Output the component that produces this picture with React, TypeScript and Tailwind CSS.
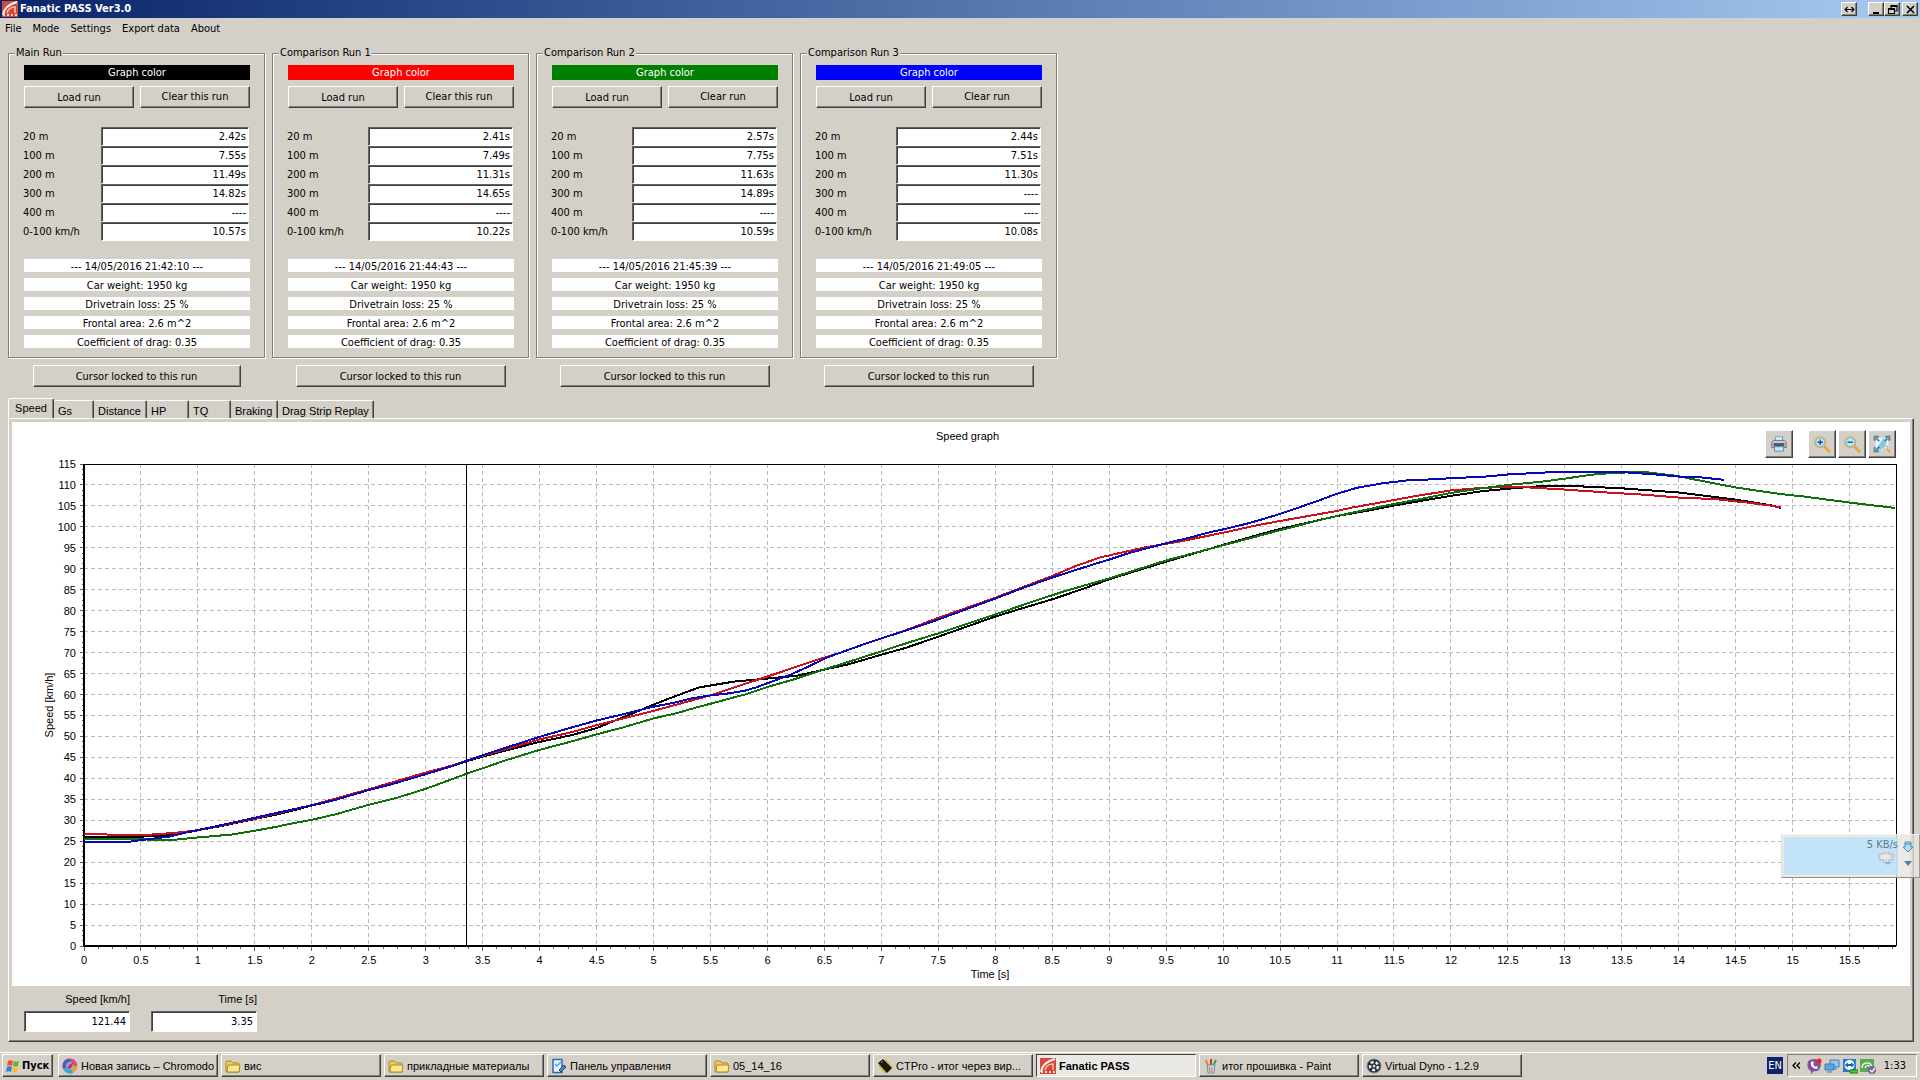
import type { ReactNode } from 'react'
import clsx from 'clsx'

interface Run {
  id: string
  title: string
  color: string
  clearLabel: string
  fieldWidth: string
  lockWidth: string
  times: string[]
  date: string
}

const DISTANCES = ['20 m', '100 m', '200 m', '300 m', '400 m', '0-100 km/h']

const SETUP = [
  'Car weight: 1950 kg',
  'Drivetrain loss: 25 %',
  'Frontal area: 2.6 m^2',
  'Coefficient of drag: 0.35',
]

const RUNS: Run[] = [
  {
    id: 'main',
    title: 'Main Run',
    color: 'bg-black',
    clearLabel: 'Clear this run',
    fieldWidth: 'w-[148px]',
    lockWidth: 'w-[208px]',
    times: ['2.42s', '7.55s', '11.49s', '14.82s', '----', '10.57s'],
    date: '14/05/2016 21:42:10',
  },
  {
    id: 'cmp1',
    title: 'Comparison Run 1',
    color: 'bg-[#ff0000]',
    clearLabel: 'Clear this run',
    fieldWidth: 'w-[145px]',
    lockWidth: 'w-[210px]',
    times: ['2.41s', '7.49s', '11.31s', '14.65s', '----', '10.22s'],
    date: '14/05/2016 21:44:43',
  },
  {
    id: 'cmp2',
    title: 'Comparison Run 2',
    color: 'bg-[#008000]',
    clearLabel: 'Clear run',
    fieldWidth: 'w-[145px]',
    lockWidth: 'w-[210px]',
    times: ['2.57s', '7.75s', '11.63s', '14.89s', '----', '10.59s'],
    date: '14/05/2016 21:45:39',
  },
  {
    id: 'cmp3',
    title: 'Comparison Run 3',
    color: 'bg-[#0000ff]',
    clearLabel: 'Clear run',
    fieldWidth: 'w-[145px]',
    lockWidth: 'w-[210px]',
    times: ['2.44s', '7.51s', '11.30s', '----', '----', '10.08s'],
    date: '14/05/2016 21:49:05',
  },
]

const TABS = [
  { label: 'Gs', width: 'w-[40px]' },
  { label: 'Distance', width: 'w-[53px]' },
  { label: 'HP', width: 'w-[42px]' },
  { label: 'TQ', width: 'w-[42px]' },
  { label: 'Braking', width: 'w-[47px]' },
  { label: 'Drag Strip Replay', width: 'w-[96px]' },
]

// Visible range of the speed graph: seconds across, km/h up.
const T_MAX = 15.907
const V_MAX = 115
const CURSOR_T = 3.356

type Point = [number, number]

const MAIN: Point[] = [
  [0, 26.1], [0.4, 26], [0.6, 26.2], [0.8, 26.6], [1, 27.6], [1.2, 28.6], [1.5, 30.3], [1.7, 31.4], [2, 33.5],
  [2.2, 34.8], [2.5, 37.2], [2.7, 38.6], [3, 41], [3.24, 43], [3.36, 44.1], [3.5, 45.2], [3.77, 47.1], [4, 48.7],
  [4.28, 50.3], [4.5, 52], [4.79, 55.2], [5, 57.6], [5.19, 59.6], [5.4, 61.7], [5.71, 63.1], [6, 63.8],
  [6.26, 64.5], [6.49, 65.9], [6.71, 67.2], [7, 69.5], [7.21, 71.1], [7.5, 73.8], [8, 78.6], [8.3, 81.1],
  [8.51, 82.8], [8.78, 85.3], [9, 87.5], [9.5, 91.7], [10, 95.7], [10.32, 98.2], [10.5, 99.5], [11, 102.6],
  [11.28, 103.9], [11.5, 105.1], [12, 107.4], [12.27, 108.5], [12.5, 109.1], [12.8, 109.75], [13.07, 109.75],
  [13.5, 109.2], [14, 108.2], [14.5, 106.5], [14.8, 105.2], [14.9, 104.5],
]

const RED: Point[] = [
  [0, 26.7], [0.2, 26.6], [0.6, 26.6], [0.8, 27], [1, 27.6], [1.2, 28.7], [1.5, 30.4], [2, 33.6], [2.5, 37.4],
  [3, 41.4], [3.24, 43.1], [3.36, 44.2], [3.5, 45.4], [3.77, 47.5], [4, 49.3], [4.28, 51], [4.5, 52.7],
  [5, 56.1], [5.5, 59.8], [5.8, 62.5], [6, 64.3], [6.45, 68.4], [6.62, 69.8], [6.89, 72.4], [7, 73.4],
  [7.22, 75.4], [7.5, 78.3], [8, 83.1], [8.51, 88.4], [8.7, 90.6], [8.92, 92.7], [9, 93.2], [9.33, 95.2],
  [9.6, 96.4], [10, 98.6], [10.3, 100.4], [10.5, 101.4], [11, 103.8], [11.13, 104.6], [11.5, 106.4],
  [11.7, 107.4], [12, 108.7], [12.27, 109.3], [12.57, 109.6], [13, 108.9], [13.37, 108.2], [13.68, 107.7],
  [14, 107], [14.33, 106.6], [14.6, 105.8], [14.8, 105.1], [14.9, 104.6],
]

const GREEN: Point[] = [
  [0, 25.6], [0.3, 25.6], [0.7, 25.3], [0.78, 25.3], [1, 25.9], [1.3, 26.6], [1.5, 27.5], [1.7, 28.5], [1.8, 29.1],
  [2, 30.1], [2.22, 31.5], [2.32, 32.3], [2.5, 33.7], [2.74, 35.3], [3, 37.5], [3.2, 39.5], [3.36, 41.1],
  [3.5, 42.4], [3.7, 44.3], [4, 46.8], [4.28, 48.8], [4.5, 50.5], [4.74, 52.2], [4.9, 53.5], [5, 54.3],
  [5.21, 55.6], [5.4, 57.1], [5.5, 57.8], [5.8, 60], [6, 61.8], [6.23, 63.6], [6.49, 65.9], [7, 70.3],
  [7.26, 72.6], [7.5, 74.6], [8, 79.1], [8.3, 81.9], [8.59, 84.5], [8.78, 86], [9, 87.7], [9.5, 92],
  [10, 95.6], [10.32, 97.9], [10.5, 99.2], [10.86, 101.7], [11, 102.6], [11.43, 105.1], [11.8, 107], [12, 108.1],
  [12.27, 109.2], [12.5, 110], [12.8, 110.8], [13, 111.5], [13.22, 112.4], [13.43, 112.9], [13.7, 113.1],
  [14, 112.1], [14.1, 111.5], [14.5, 109.4], [14.9, 107.8], [15.08, 107.3], [15.5, 105.8], [15.9, 104.5],
]

const BLUE: Point[] = [
  [0, 24.7], [0.2, 24.7], [0.4, 24.9], [0.6, 25.6], [0.75, 26.1], [0.91, 27.2], [1, 27.7], [1.2, 28.8],
  [1.5, 30.6], [2, 33.6], [2.2, 34.8], [2.5, 37.2], [2.7, 38.6], [3, 41], [3.24, 43], [3.36, 44.2], [3.5, 45.5],
  [3.77, 47.9], [4, 49.9], [4.25, 51.9], [4.5, 53.8], [4.75, 55.4], [5, 57.1], [5.19, 58.1], [5.34, 59.1],
  [5.5, 59.8], [5.64, 60.2], [5.8, 60.9], [5.9, 61.7], [6, 62.7], [6.19, 64.6], [6.37, 66.8], [6.52, 68.8],
  [6.63, 69.9], [6.89, 72.4], [7, 73.4], [7.22, 75.3], [7.5, 77.9], [8, 82.9], [8.22, 85.2], [8.51, 88],
  [8.74, 90], [8.89, 91.3], [9, 92.2], [9.18, 93.8], [9.5, 96.1], [9.7, 97.4], [9.88, 98.7], [10, 99.4],
  [10.2, 100.7], [10.33, 101.7], [10.5, 103.1], [10.62, 104.2], [10.83, 106.2], [11, 107.9], [11.17, 109.3],
  [11.4, 110.4], [11.62, 111.1], [11.8, 111.3], [12, 111.6], [12.3, 112], [12.5, 112.5], [12.92, 113.1],
  [13.49, 113.1], [13.8, 112.5], [14, 112], [14.2, 111.8], [14.4, 111.2],
]

const SERIES = [
  { color: '#000000', points: MAIN },
  { color: '#cc1020', points: RED },
  { color: '#107010', points: GREEN },
  { color: '#0808b8', points: BLUE },
]

const BEVEL =
  'border border-t-white border-l-white border-r-[#404040] border-b-[#404040] bg-[#d4d0c8] shadow-[inset_-1px_-1px_0_#808080]'
const SUNKEN =
  'border border-t-[#606060] border-l-[#606060] border-r-white border-b-white bg-white shadow-[inset_1px_1px_0_#404040]'

export default function App() {
  return (
    <div className="relative flex min-h-screen flex-col bg-[#d4d0c8] font-['DejaVu_Sans_Condensed','DejaVu_Sans',sans-serif] text-[11px] leading-[14px] text-black">
      <TitleBar />
      <MenuBar />
      <main className="flex flex-1 flex-col pt-2 pr-1.5 pb-[10px] pl-2">
        <div className="flex flex-wrap gap-[7px]">
          {RUNS.map((run) => (
            <RunPanel key={run.id} run={run} />
          ))}
        </div>
        <GraphTabs />
      </main>
      <Taskbar />
      <SpeedWidget />
    </div>
  )
}

function TitleBar() {
  return (
    <header className="flex h-[18px] items-center bg-linear-to-r from-[#0a246a] to-[#a6caf0] pr-0.5 pl-0.5">
      <FanaticIcon />
      <h1 className="ml-0.5 flex-1 font-bold text-white">Fanatic PASS Ver3.0</h1>
      <CaptionButton label="Resize">
        <path d="M2 5.500h9M4.500 3L2 5.500 4.500 8M8.500 3L11 5.500 8.500 8" />
      </CaptionButton>
      <div className="ml-[11px] flex">
        <CaptionButton label="Minimize">
          <path d="M3 9h6" strokeWidth="2" />
        </CaptionButton>
        <CaptionButton label="Restore">
          <path d="M5 4V1.500h6V7H9M5 2.500h6M2.500 4.500h6v5h-6zM2.500 5.500h6" />
        </CaptionButton>
      </div>
      <div className="ml-0.5">
        <CaptionButton label="Close">
          <path d="M3 2l7 7M10 2l-7 7" strokeWidth="1.600" />
        </CaptionButton>
      </div>
    </header>
  )
}

function CaptionButton({ label, children }: { label: string; children: ReactNode }) {
  return (
    <button type="button" aria-label={label} className={clsx(BEVEL, 'flex h-[14px] w-4 items-center justify-center')}>
      <svg viewBox="0 0 13 11" className="h-[11px] w-[13px]" fill="none" stroke="#000" strokeWidth="1.100">
        {children}
      </svg>
    </button>
  )
}

function MenuBar() {
  return (
    <nav className="flex h-5 items-center gap-[11px] pt-0.5 pl-[5px]">
      {['File', 'Mode', 'Settings', 'Export data', 'About'].map((item) => (
        <button key={item} type="button">
          {item}
        </button>
      ))}
    </nav>
  )
}

function RunPanel({ run }: { run: Run }) {
  return (
    <section className="flex w-[257px] flex-col items-center">
      <fieldset className="w-full border border-[#808080] pr-[14px] pb-[9px] pl-[15px] shadow-[1px_1px_0_#fff,inset_1px_1px_0_#fff]">
        <legend className="-ml-[9px] bg-[#d4d0c8] px-px">{run.title}</legend>
        <div className={clsx('mt-[5px] flex h-[15px] items-center justify-center text-white', run.color)}>
          Graph color
        </div>
        <div className="mt-1.5 flex gap-1.5">
          <button type="button" className={clsx(BEVEL, 'h-[22px] flex-1 pt-0.5')}>
            Load run
          </button>
          <button type="button" className={clsx(BEVEL, 'h-[22px] flex-1')}>
            {run.clearLabel}
          </button>
        </div>
        <div className="mt-[19px] mr-px -ml-px">
          {DISTANCES.map((distance, index) => {
            const fieldId = `${run.id}-${index}`

            return (
              <div key={distance} className="flex h-[19px] items-center justify-between">
                <label htmlFor={fieldId}>{distance}</label>
                <input
                  id={fieldId}
                  readOnly
                  value={run.times[index]}
                  className={clsx(SUNKEN, run.fieldWidth, 'h-[19px] pr-0.5 text-right')}
                />
              </div>
            )
          })}
        </div>
        <div className="mt-[18px] flex flex-col gap-1.5 text-center leading-4">
          <p className="h-[13px] bg-white">--- {run.date} ---</p>
          {SETUP.map((line) => (
            <p key={line} className="h-[13px] bg-white">
              {line}
            </p>
          ))}
        </div>
      </fieldset>
      <button type="button" className={clsx(BEVEL, run.lockWidth, 'mt-[7px] h-[22px] pt-0.5')}>
        Cursor locked to this run
      </button>
    </section>
  )
}

function GraphTabs() {
  return (
    <div className="mt-[11px] flex flex-1 flex-col font-['Liberation_Sans',sans-serif]">
      <div role="tablist" className="flex h-5 items-end">
        <button
          type="button"
          role="tab"
          aria-selected="true"
          className="-mb-px h-[21px] w-[46px] rounded-t-xs border-t border-r border-l border-t-white border-r-[#404040] border-l-white bg-[#d4d0c8] pb-0.5 shadow-[inset_-1px_0_0_#808080]"
        >
          Speed
        </button>
        {TABS.map((tab) => (
          <button
            key={tab.label}
            type="button"
            role="tab"
            aria-selected="false"
            className={clsx(
              'h-[18px] rounded-t-xs border-t border-r border-t-white border-r-[#404040] pt-0.5 pl-1 text-left whitespace-nowrap shadow-[inset_-1px_0_0_#808080]',
              tab.width,
            )}
          >
            {tab.label}
          </button>
        ))}
      </div>
      <div className="flex flex-1 flex-col border border-t-white border-r-[#404040] border-b-[#404040] border-l-white p-[3px] shadow-[inset_-1px_-1px_0_#808080]">
        <SpeedGraph />
        <div className="flex gap-[21px] pt-1.5 pb-1.5 pl-3">
          <Readout id="speed" label="Speed [km/h]" value="121.44" />
          <Readout id="time" label="Time [s]" value="3.35" />
        </div>
      </div>
    </div>
  )
}

function Readout({ id, label, value }: { id: string; label: string; value: string }) {
  return (
    <div className="flex w-[106px] flex-col gap-[5px] text-right">
      <label htmlFor={id}>{label}</label>
      <input
        id={id}
        readOnly
        value={value}
        className={clsx(SUNKEN, "h-[21px] pr-[3px] text-right font-['DejaVu_Sans_Condensed',sans-serif]")}
      />
    </div>
  )
}

function SpeedGraph() {
  return (
    <div className="flex flex-1 flex-col bg-white pr-[14px] pb-10 pl-[72px]">
      <div className="-ml-[45px] grid h-[42px] grid-cols-[1fr_auto_1fr] pt-2">
        <h2 className="col-start-2 -mt-px">Speed graph</h2>
        <div className="flex justify-end gap-0.5">
          <ToolButton label="Print" className="mr-[13px]">
            <path d="M6 2h8v5H6z" fill="#d8f0fa" stroke="#5a9cc0" />
            <path d="M2 8l2-2h12l2 2v6H2z" fill="#c8ccd0" stroke="#606870" />
            <path d="M4 9h12v4H4z" fill="#505860" />
            <path d="M5 13h10v5H5z" fill="#c0e8fa" stroke="#5090b8" />
          </ToolButton>
          <ToolButton label="Zoom in">
            <Lens />
            <path d="M5 8h6M8 5v6" stroke="#205080" strokeWidth="1.500" />
          </ToolButton>
          <ToolButton label="Zoom out">
            <Lens />
            <path d="M5 8h6" stroke="#205080" strokeWidth="1.500" />
          </ToolButton>
          <ToolButton label="Fit to window">
            <path d="M3 3h14v14H3z" fill="#eef6fa" />
            <path d="M5 13L11 4h4v5l-6 8H5z" fill="#80ccf0" />
            <path d="M4 4l3 3M16 4l-3 3M4 16l3-3" stroke="#386888" strokeWidth="1.500" />
            <path d="M1 6V1h5v2H3v3zM14 1h5v5h-2V3h-3zM1 14v5h5v-2H3v-3z" fill="#6098bc" stroke="#386888" strokeWidth="0.500" />
            <circle cx="14" cy="14" r="2.500" fill="#c8ecfa" stroke="#d0a050" />
            <path d="M16 16l3 3" stroke="#e0a030" strokeWidth="2" />
          </ToolButton>
        </div>
      </div>
      <div className="flex flex-1">
        <Plot />
      </div>
    </div>
  )
}

function ToolButton({ label, className, children }: { label: string; className?: string; children: ReactNode }) {
  return (
    <button
      type="button"
      aria-label={label}
      className={clsx(BEVEL, 'flex size-7 items-center justify-center', className)}
    >
      <svg viewBox="0 0 20 20" className="size-[18px]" fill="none">
        {children}
      </svg>
    </button>
  )
}

function Lens() {
  return (
    <>
      <path d="M13 13l5 5" stroke="#e8a838" strokeWidth="3" strokeLinecap="round" />
      <circle cx="8" cy="8" r="6" fill="#b8e8fa" stroke="#d8b060" strokeWidth="1.500" />
      <circle cx="8" cy="8" r="5" stroke="#78b8d8" />
    </>
  )
}

function Plot() {
  const xPos = (t: number) => `${(t / T_MAX) * 100}%`
  const yPos = (v: number) => `${100 - (v / V_MAX) * 100}%`
  const xTicks = Array.from({ length: 32 }, (_, i) => i / 2)
  const yTicks = Array.from({ length: 24 }, (_, i) => i * 5)
  const xMinor = Array.from({ length: 128 }, (_, i) => i / 8)
  const yMinor = Array.from({ length: 93 }, (_, i) => i * 1.25)

  return (
    <svg
      role="img"
      aria-label="Speed over time for four runs"
      className="min-h-80 w-full self-stretch overflow-visible text-[11px]"
    >
      <g stroke="#bcbcbc" strokeDasharray="4 3" shapeRendering="crispEdges">
        {xTicks.slice(1).map((t) => (
          <line key={t} x1={xPos(t)} x2={xPos(t)} y1="0" y2="100%" />
        ))}
        {yTicks.slice(1, -1).map((v) => (
          <line key={v} x1="0" x2="100%" y1={yPos(v)} y2={yPos(v)} />
        ))}
      </g>

      <g stroke="#606060" shapeRendering="crispEdges">
        {xMinor.map((t) => (
          <svg key={t} x={xPos(t)} y="100%" className="overflow-visible">
            <line y2={t % 0.5 === 0 ? 5 : 3} />
          </svg>
        ))}
        {yMinor.map((v) => (
          <line key={v} x1={v % 5 === 0 ? -4 : -2} x2="0" y1={yPos(v)} y2={yPos(v)} />
        ))}
      </g>

      <g stroke="#000" shapeRendering="crispEdges">
        <line x1="0" x2="100%" y1="0" y2="0" />
        <line x1="100%" x2="100%" y1="0" y2="100%" />
        <line x1="0" x2="0" y1="0" y2="100%" strokeWidth="2" />
        <line x1="0" x2="100%" y1="100%" y2="100%" strokeWidth="2" />
        <line x1={xPos(CURSOR_T)} x2={xPos(CURSOR_T)} y1="0" y2="100%" />
      </g>

      <svg width="100%" height="100%" viewBox={`0 0 ${T_MAX} ${V_MAX}`} preserveAspectRatio="none">
        {SERIES.map((series) => (
          <polyline
            key={series.color}
            points={series.points.map(([t, v]) => `${t},${V_MAX - v}`).join(' ')}
            fill="none"
            stroke={series.color}
            strokeWidth="2"
            shapeRendering="crispEdges"
            vectorEffect="non-scaling-stroke"
          />
        ))}
      </svg>

      {xTicks.map((t) => (
        <svg key={t} x={xPos(t)} y="100%" className="overflow-visible">
          <text y="18" textAnchor="middle">
            {t}
          </text>
        </svg>
      ))}
      {yTicks.map((v) => (
        <text key={v} x="-8" y={yPos(v)} dy="4" textAnchor="end">
          {v}
        </text>
      ))}
      <svg x="50%" y="100%" className="overflow-visible">
        <text y="32" textAnchor="middle">
          Time [s]
        </text>
      </svg>
      <svg y="50%" className="overflow-visible">
        <text transform="translate(-31 0) rotate(-90)" textAnchor="middle">
          Speed [km/h]
        </text>
      </svg>
    </svg>
  )
}

function SpeedWidget() {
  return (
    <aside className="absolute top-[834px] right-0 flex h-11 w-[139px] border border-t-[#f4f2ee] border-r-[#a09c94] border-b-[#908c84] border-l-[#e4e0d8] bg-[#e8e5df]/80 p-0.5 text-[#607888]">
      <div className="flex flex-1 flex-col items-end bg-[#b8e2fc]/80">
        <span className="pt-px">5 KB/s</span>
        <svg viewBox="0 0 16 14" className="mr-1 h-[14px] w-4" fill="none">
          <path d="M1 2h4V0h6v2h4v6h-4l-1 3H7L5 8H1z" fill="#dcdcd8" stroke="#b4b8b8" />
          <path d="M4 3v4M7 3v4M10 3v4" stroke="#fff" />
          <path d="M6 10h8l-4 3z" fill="#80bce0" />
        </svg>
      </div>
      <div className="flex w-[19px] flex-col items-center gap-2 pt-1">
        <svg viewBox="0 0 12 12" className="size-3" fill="#b0dcf4" stroke="#4890b8">
          <path d="M3 1h6v5h2L6 11 1 6h2zM3 3h6" />
        </svg>
        <svg viewBox="0 0 8 5" className="h-[5px] w-2" fill="#5080a0">
          <path d="M0 0h8L4 5z" />
        </svg>
      </div>
    </aside>
  )
}

interface Task {
  label: string
  icon: ReactNode
  active?: boolean
}

const TASKS: Task[] = [
  { label: 'Новая запись – Chromodo', icon: <ChromodoIcon /> },
  { label: 'вис', icon: <FolderIcon /> },
  { label: 'прикладные материалы', icon: <FolderIcon /> },
  { label: 'Панель управления', icon: <PanelIcon /> },
  { label: '05_14_16', icon: <FolderIcon /> },
  { label: 'CTPro - итог через вир...', icon: <ChipIcon /> },
  { label: 'Fanatic PASS', icon: <FanaticIcon />, active: true },
  { label: 'итог прошивка - Paint', icon: <PaintIcon /> },
  { label: 'Virtual Dyno - 1.2.9', icon: <DynoIcon /> },
]

function Taskbar() {
  return (
    <footer className="flex h-7 items-start border-t border-white pt-px pr-[3px] pl-0.5">
      <button type="button" className={clsx(BEVEL, 'flex h-[23px] w-[51px] items-center gap-px pl-0.5 font-bold')}>
        <WindowsIcon />
        Пуск
      </button>
      <div className="ml-[5px] flex min-w-0 flex-1 gap-[3px] font-['Liberation_Sans',sans-serif]">
        {TASKS.map((task) => (
          <button
            key={task.label}
            type="button"
            aria-pressed={task.active ?? false}
            className={clsx(
              'flex h-[23px] w-40 min-w-0 items-center gap-[3px] pl-[3px]',
              task.active
                ? 'border border-t-[#404040] border-r-white border-b-white border-l-[#404040] bg-[#eae8e4] font-bold'
                : BEVEL,
            )}
          >
            {task.icon}
            <span className="truncate">{task.label}</span>
          </button>
        ))}
      </div>
      <span className="mt-[3px] h-[17px] w-4 bg-[#0a246a] text-center leading-[17px] text-white">EN</span>
      <div className="ml-1 flex h-[23px] w-[130px] items-center gap-0.5 border border-t-[#808080] border-r-white border-b-white border-l-[#808080] pr-2.5 pl-1">
        <button type="button" aria-label="Show hidden icons" className="w-3">
          <svg viewBox="0 0 8 7" className="h-[7px] w-2" fill="none" stroke="#000" strokeWidth="1.300">
            <path d="M4 0.500L1 3.500l3 3M8 0.500L5 3.500l3 3" />
          </svg>
        </button>
        <ViberIcon />
        <NetworkIcon />
        <TeamViewerIcon />
        <GreenShieldIcon />
        <time className="ml-auto">1:33</time>
      </div>
    </footer>
  )
}

function FanaticIcon() {
  return (
    <svg viewBox="0 0 16 16" className="size-4 shrink-0" fill="none">
      <path d="M0 0h16v16H0z" fill="#d84838" />
      <path d="M1 14C2 7 7 3 15 1" stroke="#fff" strokeWidth="2" />
      <path d="M5 12c1-4 4-6 8-6v6" stroke="#f8c0b0" strokeWidth="1.500" />
      <path d="M1 13h2v2H1zM5 13h2v2H5zM9 13h2v2H9zM13 13h2v2h-2z" fill="#f4d0c8" />
    </svg>
  )
}

function WindowsIcon() {
  return (
    <svg viewBox="0 0 16 16" className="size-4 shrink-0">
      <path d="M3 3c2-1 3-1 5 0L7 8C5 7 4 7 2 8z" fill="#f05020" />
      <path d="M9 3c2 1 3 1 5 0l-1 5c-2 1-3 1-5 0z" fill="#68b030" />
      <path d="M2 9c2-1 3-1 5 0l-1 5c-2-1-3-1-5 0z" fill="#3878e0" />
      <path d="M8 9c2 1 3 1 5 0l-1 5c-2 1-3 1-5 0z" fill="#f8c020" />
    </svg>
  )
}

function ChromodoIcon() {
  return (
    <svg viewBox="0 0 16 16" className="size-4 shrink-0">
      <path d="M8 8L1 11A7.500 7.500 0 0 1 8 .5z" fill="#5858c0" />
      <path d="M8 8V.5A7.500 7.500 0 0 1 15.500 8z" fill="#e04878" />
      <path d="M8 8h7.500A7.500 7.500 0 0 1 10 15z" fill="#f0a030" />
      <path d="M8 8l3 7A7.500 7.500 0 0 1 1 11z" fill="#30a8d8" />
      <circle cx="8" cy="8" r="4" fill="#88a8d8" />
      <path d="M12 4L9 10 5 11l2-4z" fill="#d03040" />
    </svg>
  )
}

function FolderIcon() {
  return (
    <svg viewBox="0 0 16 16" className="size-4 shrink-0" stroke="#b08820">
      <path d="M1 13V4q0-1 1-1h4l2 2h5q1 0 1 1v8H2q-1 0-1-1z" fill="#f0cc58" />
      <path d="M2 14l1-7h12l-1 7z" fill="#fbe890" />
    </svg>
  )
}

function PanelIcon() {
  return (
    <svg viewBox="0 0 16 16" className="size-4 shrink-0" fill="none">
      <path d="M2 1.500h9v13H2z" fill="#e8f4ff" stroke="#2868b0" strokeWidth="1.500" />
      <path d="M4 6l2 2 4-4" stroke="#58a0e0" strokeWidth="1.500" />
      <path d="M8 12l5-5 2 2-5 5z" fill="#4888d0" stroke="#204878" />
    </svg>
  )
}

function ChipIcon() {
  return (
    <svg viewBox="0 0 16 16" className="size-4 shrink-0">
      <path d="M2 7l7 8M5 4l8 9M8 2l7 8" stroke="#c8c020" strokeWidth="2" />
      <path d="M1 5l5-4 9 9-5 5z" fill="#181810" />
      <path d="M4 5l2-2" stroke="#888" />
    </svg>
  )
}

function PaintIcon() {
  return (
    <svg viewBox="0 0 16 16" className="size-4 shrink-0" fill="none">
      <path d="M5 8L3 2" stroke="#e08020" strokeWidth="2" />
      <path d="M8 8V1" stroke="#d03030" strokeWidth="2" />
      <path d="M10 8l3-6" stroke="#38a050" strokeWidth="2" />
      <path d="M4 7h8l-1 8H5z" fill="#c8dce8" stroke="#7090a0" />
      <path d="M6 9l1 5M9 9v5" stroke="#e06050" />
    </svg>
  )
}

function DynoIcon() {
  return (
    <svg viewBox="0 0 16 16" className="size-4 shrink-0">
      <circle cx="8" cy="8" r="7" fill="#202830" stroke="#808890" />
      <circle cx="8" cy="8" r="4" fill="none" stroke="#f0f4f8" strokeWidth="2.500" strokeDasharray="3 2" />
      <circle cx="8" cy="8" r="1.500" fill="#c0d0e0" />
    </svg>
  )
}

function ViberIcon() {
  return (
    <svg viewBox="0 0 16 16" className="size-4 shrink-0">
      <path d="M2 3q6-4 12 0 2 5-1 9-3 2-5 1l-3 3v-3Q0 11 2 3z" fill="#7d50a0" />
      <path d="M5 4c-1 4 2 7 6 7l1-2-2-1-1 1-2-3 1-1-1-2z" fill="#fff" />
      <circle cx="13" cy="3" r="2.500" fill="#f02020" />
    </svg>
  )
}

function NetworkIcon() {
  return (
    <svg viewBox="0 0 16 16" className="size-4 shrink-0" stroke="#4878a8">
      <path d="M6 2h9v7H6zM9 11h4" fill="#90c8f0" />
      <path d="M1 6h9v6H1zM3 14h5" fill="#58a8e8" />
    </svg>
  )
}

function TeamViewerIcon() {
  return (
    <svg viewBox="0 0 16 16" className="size-4 shrink-0">
      <path d="M1 1h13v13H1z" fill="#2080d0" />
      <circle cx="7.500" cy="7" r="5" fill="#fff" />
      <path d="M2.500 7L6 4.500v1.500h3V4.500L12.500 7 9 9.500V8H6v1.500z" fill="#1868b8" />
      <path d="M8 12h8v3H8z" fill="#50d030" stroke="#208010" />
    </svg>
  )
}

function GreenShieldIcon() {
  return (
    <svg viewBox="0 0 16 16" className="size-4 shrink-0" fill="none">
      <path d="M0 1h14v13H0z" fill="#58a858" />
      <path d="M2 10c0-6 9-7 10-1M5 10c1-3 4-3 5-1" stroke="#e0f4d8" strokeWidth="1.500" />
      <circle cx="12" cy="12" r="4" fill="#806098" />
      <path d="M10 12l2 2 3-4" stroke="#fff" strokeWidth="1.300" />
    </svg>
  )
}
